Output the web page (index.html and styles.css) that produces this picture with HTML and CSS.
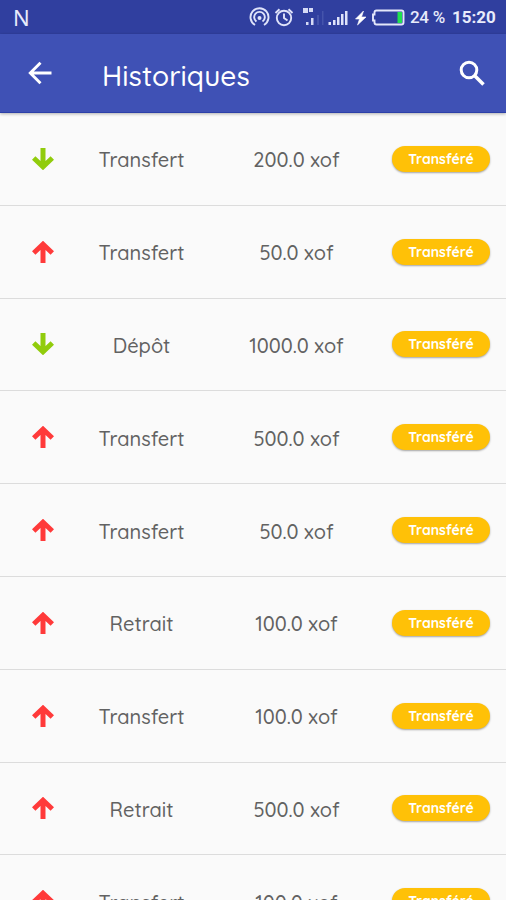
FILE: index.html
```html
<!DOCTYPE html>
<html lang="fr">
<head>
<meta charset="utf-8">
<title>Historiques</title>
<link rel="stylesheet" href="styles.css">
</head>
<body>
<svg class="defs" width="0" height="0" aria-hidden="true">
  <symbol id="up" viewBox="0 0 22 22"><path d="M11 22V3M1.700 12L11 3.200l9.300 8.800" fill="none" stroke="currentColor" stroke-width="5"/></symbol>
  <symbol id="down" viewBox="0 0 22 22"><path d="M11 0v19M1.700 10L11 18.800l9.300-8.800" fill="none" stroke="currentColor" stroke-width="5"/></symbol>
</svg>
<div class="status">
  <span class="carrier">N</span>
  <svg class="indicators" width="170" height="34" viewBox="0 0 170 34" aria-hidden="true">
    <g fill="none" stroke="#dfe3fa" stroke-width="1.900">
      <path d="M7 25a9 9 0 1 1 9 0M8.500 21.500a5.300 5.300 0 1 1 6 0"/>
      <circle cx="36" cy="18" r="7.200"/>
      <path d="M36 13.500V18l3.500 2.500M27.500 13l4-3.800M44.500 13l-4-3.800"/>
    </g>
    <circle cx="11.500" cy="18" r="2" fill="#dfe3fa"/>
    <path d="M55 8h5v5h-5zM61 8h4v4h-4zM58 22h2.500v3H58zM63 18h2.500v7H63z" fill="#d5daf5"/>
    <path d="M69 15h2v10h-2zM74 11h1.500v14H74z" fill="#4554ac"/>
    <path d="M80.500 22H83v3h-2.500zM85 20h2.500v5H85zM89 17h2.500v8H89zM93 14h2.500v11H93zM97 11h2.500v14H97z" fill="#dfe3fa"/>
    <path d="M115.500 11l-8 8h4l-2 6 8.500-8h-4.500z" fill="#fff" stroke="#fff" stroke-width=".6"/>
    <path d="M128.500 10.500h25q2 0 2 2v10q0 2-2 2h-25q-2 0-2-2v-2H125v-6h1.500v-2q0-2 2-2z" fill="none" stroke="#e4e7fa" stroke-width="1.900"/>
    <path d="M149.500 12h4.500v11h-4.500z" fill="#20e050"/>
  </svg>
  <span class="battery">24&nbsp;%</span>
  <span class="clock">15:20</span>
</div>
<header class="bar">
  <svg class="back" width="24" height="24" viewBox="0 0 24 24"><path d="M23.500 12H3M12.500 1.800L2.300 12l10.200 10.200" fill="none" stroke="#fff" stroke-width="2.900"/></svg>
  <h1 class="title">Historiques</h1>
  <svg class="search" width="27" height="27" viewBox="0 0 27 27"><circle cx="10" cy="10" r="7.800" fill="none" stroke="#fff" stroke-width="3"/><path d="M15.500 15.500l9 9" stroke="#fff" stroke-width="3.500"/></svg>
</header>
<main class="list">
  <div class="row"><svg class="arrow in"><use href="#down"/></svg><span class="type">Transfert</span><span class="amount">200.0 xof</span><span class="pill">Transféré</span></div>
  <div class="row"><svg class="arrow out"><use href="#up"/></svg><span class="type">Transfert</span><span class="amount">50.0 xof</span><span class="pill">Transféré</span></div>
  <div class="row"><svg class="arrow in"><use href="#down"/></svg><span class="type">Dépôt</span><span class="amount">1000.0 xof</span><span class="pill">Transféré</span></div>
  <div class="row"><svg class="arrow out"><use href="#up"/></svg><span class="type">Transfert</span><span class="amount">500.0 xof</span><span class="pill">Transféré</span></div>
  <div class="row"><svg class="arrow out"><use href="#up"/></svg><span class="type">Transfert</span><span class="amount">50.0 xof</span><span class="pill">Transféré</span></div>
  <div class="row"><svg class="arrow out"><use href="#up"/></svg><span class="type">Retrait</span><span class="amount">100.0 xof</span><span class="pill">Transféré</span></div>
  <div class="row"><svg class="arrow out"><use href="#up"/></svg><span class="type">Transfert</span><span class="amount">100.0 xof</span><span class="pill">Transféré</span></div>
  <div class="row"><svg class="arrow out"><use href="#up"/></svg><span class="type">Retrait</span><span class="amount">500.0 xof</span><span class="pill">Transféré</span></div>
  <div class="row"><svg class="arrow out"><use href="#up"/></svg><span class="type">Transfert</span><span class="amount">100.0 xof</span><span class="pill">Transféré</span></div>
</main>
</body>
</html>
```
FILE: styles.css
```css
* { box-sizing: border-box; }

body {
  margin: 0;
  height: 900px;
  overflow: hidden;
  display: flex;
  flex-direction: column;
  background: #fafafa;
  font-family: Quicksand, Lato, sans-serif;
}

.defs { position: absolute; }

.status {
  flex: none;
  display: flex;
  align-items: center;
  height: 34px;
  padding-left: 13px;
  background: #303f9f;
  color: #e8ebfb;
  font-family: Roboto, sans-serif;
  font-size: 17px;
}

.carrier {
  width: 235px;
  font-family: "Noto Sans", sans-serif;
  font-size: 22px;
}

.indicators { flex: none; width: 170px; margin-right: -8px; }
.battery { width: 42px; letter-spacing: -0.3px; font-weight: 500; }
.clock { font-weight: 700; }

.bar {
  position: relative;
  flex: none;
  display: flex;
  align-items: center;
  height: 79px;
  padding: 1px 20px 1px 28px;
  background: #3f51b5;
  border-bottom: 1px solid #2c40a8;
  box-shadow: 0 1px 3px rgba(0, 0, 0, 0.3);
}

.title {
  flex: 1;
  margin: 5px 0 0 50px;
  color: #fff;
  font-size: 28px;
  font-weight: 500;
  letter-spacing: 0.1px;
}

.list { flex: 1; min-height: 0; overflow: hidden; }

.row {
  display: grid;
  grid-template-columns: 86px 110px 196px 98px;
  align-items: center;
  height: 92.8px;
  border-bottom: 1px solid #dcdcdc;
  color: #626262;
  font-size: 20px;
  font-weight: 500;
}

.arrow { width: 22px; height: 22px; margin: 0 0 0 31.5px; }
.in { color: #91cc0c; }
.out { color: #ff3a3a; }

.type, .amount {
  justify-self: center;
  padding-top: 2px;
  white-space: nowrap;
}

.type { padding-left: 1px; }
.amount { padding-left: 5px; }

.pill {
  height: 26px;
  border-radius: 13px;
  background: #ffc107;
  box-shadow: 0 1px 2px rgba(0, 0, 0, 0.35);
  color: #fff;
  font-size: 14px;
  font-weight: 700;
  line-height: 26px;
  text-align: center;
}
```
